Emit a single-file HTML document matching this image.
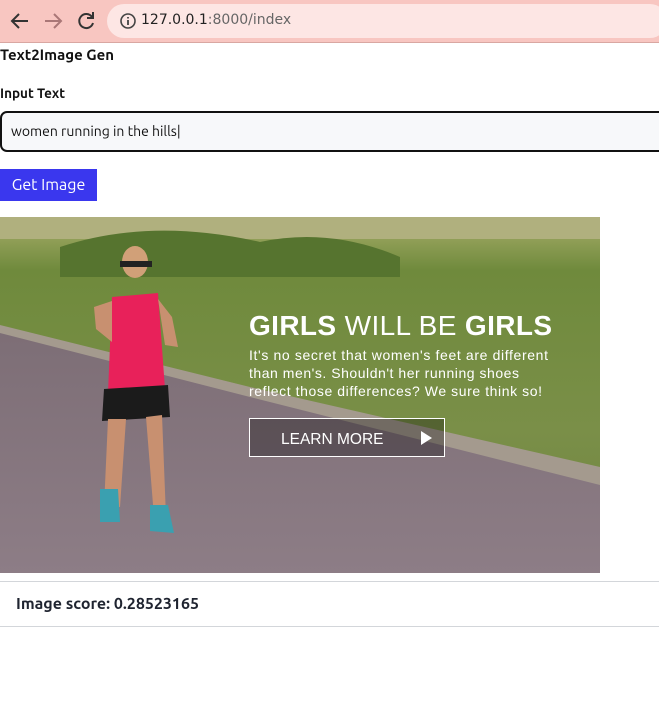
<!DOCTYPE html>
<html><head><style>
body{margin:0;width:659px;height:723px;overflow:hidden;background:#fff;font-family:"Ubuntu","DejaVu Sans","Liberation Sans",sans-serif;color:#111}
.bar{position:absolute;top:0;left:0;width:659px;height:42px;background:#f8c6c1;border-bottom:1px solid #d9a7a2}
.url{position:absolute;left:107px;top:4px;width:560px;height:34px;border-radius:17px;background:#fde6e4}
.url span{position:absolute;left:34px;top:8px;color:#222;font-family:"DejaVu Sans",sans-serif;font-size:14px}
h1{position:absolute;top:46px;left:0;margin:0;font-size:15px;font-weight:bold}
.lbl{position:absolute;top:85px;left:0;font-size:13.5px;font-weight:bold}
.inp{position:absolute;left:0;top:111px;width:680px;height:41px;border:2px solid #111;border-radius:7px;background:#f7f8fa;box-sizing:border-box}
.inp span{position:absolute;left:9px;top:10px;font-size:14px}
.btn{position:absolute;left:0;top:169px;width:97px;height:32px;background:#3a37ee;color:#fff;font-size:16px;line-height:32px;text-align:center}
.hr1{position:absolute;top:581px;left:0;width:659px;border-top:1px solid #d3d6da}
.hr2{position:absolute;top:626px;left:0;width:659px;border-top:1px solid #d3d6da}
.score{position:absolute;top:595px;left:16px;font-size:16px;font-weight:bold;color:#1f2430}
</style></head><body>
<div class="bar">
<svg width="100" height="42" style="position:absolute;left:0;top:0">
<path d="M28 21H13M19 14l-7 7 7 7" stroke="#333" stroke-width="2" fill="none"/>
<path d="M45 21h15M54 14l7 7-7 7" stroke="#a77" stroke-width="2" fill="none"/>
<path d="M92 17a7 7 0 1 0 1 6M93 12v6h-6" stroke="#333" stroke-width="2" fill="none"/>
</svg>
<div class="url"><svg width="20" height="20" style="position:absolute;left:11px;top:7px"><circle cx="10" cy="10" r="7" stroke="#444" stroke-width="1.6" fill="none"/><path d="M10 9v5M10 6v1.5" stroke="#444" stroke-width="1.8"/></svg><span>127.0.0.1<span style="position:static;color:#666">:8000/index</span></span></div>
</div>
<h1>Text2Image Gen</h1>
<div class="lbl">Input Text</div>
<div class="inp"><span>women running in the hills|</span></div>
<div class="btn">Get Image</div>
<svg width="600" height="356" style="position:absolute;left:0;top:217px" viewBox="0 0 600 356">
<defs><linearGradient id="g" x1="0" y1="0" x2="0" y2="1"><stop offset="0" stop-color="#a8ad6a"/><stop offset="0.15" stop-color="#6f8a3c"/><stop offset="0.6" stop-color="#7a8f48"/><stop offset="1" stop-color="#6e8240"/></linearGradient>
<linearGradient id="r" x1="0" y1="0" x2="0" y2="1"><stop offset="0" stop-color="#7d6e76"/><stop offset="1" stop-color="#8d7d86"/></linearGradient></defs>
<rect width="600" height="356" fill="url(#g)"/>
<rect width="600" height="22" fill="#b0b07e"/>
<path d="M60 30 Q150 0 260 25 Q330 10 400 40 L400 60 L60 60Z" fill="#56742f"/>
<path d="M0 108 L250 170 L600 250 L600 272 L0 118Z" fill="#a49a8e"/>
<path d="M0 116 L250 180 L600 268 L600 356 L0 356Z" fill="url(#r)"/>
<ellipse cx="135" cy="45" rx="13" ry="16" fill="#d1a078"/>
<rect x="120" y="44" width="32" height="6" fill="#222"/>
<path d="M112 80 L158 76 L165 172 L108 176Z" fill="#e8215a"/>
<path d="M94 90 L112 84 L112 125 L96 112Z M158 82 L172 100 L178 130 L165 128Z" fill="#c89070"/>
<path d="M104 172 L168 168 L170 200 L102 204Z" fill="#1b1b1b"/>
<path d="M108 202 L126 202 L120 290 L104 290Z M146 200 L162 198 L166 300 L154 300Z" fill="#c89070"/>
<path d="M100 272 l18 0 l2 33 l-20 0z M150 288 l18 0 l6 28 l-24 -2z" fill="#3aa0b0"/>
<text x="249" y="118" fill="#fff" font-family="Liberation Sans,sans-serif" font-size="28" textLength="303"><tspan font-weight="bold">GIRLS</tspan> WILL BE <tspan font-weight="bold">GIRLS</tspan></text>
<text fill="#fff" font-family="Liberation Sans,sans-serif" font-size="14"><tspan x="249" y="143" textLength="299">It's no secret that women's feet are different</tspan><tspan x="249" y="161" textLength="270">than men's. Shouldn't her running shoes</tspan><tspan x="249" y="179" textLength="293">reflect those differences? We sure think so!</tspan></text>
<rect x="249.5" y="201.5" width="195" height="38" fill="rgba(0,0,0,0.3)" stroke="#fff"/>
<text x="281" y="227" fill="#fff" font-family="Liberation Sans,sans-serif" font-size="15.5">LEARN MORE</text>
<path d="M421 214 l11 7 -11 7z" fill="#fff"/>
</svg>
<div class="hr1"></div>
<div class="score">Image score: 0.28523165</div>
<div class="hr2"></div>
</body></html>
